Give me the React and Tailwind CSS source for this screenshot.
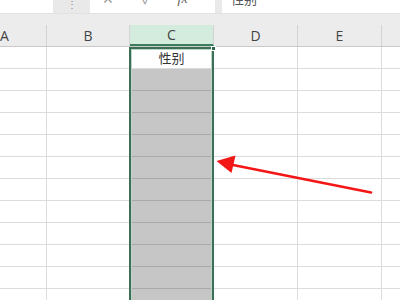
import React from "react";

const cols = [
  { l: "A", w: 84 },
  { l: "B", w: 83 },
  { l: "C", w: 84 },
  { l: "D", w: 84 },
  { l: "E", w: 84 },
  { l: "F", w: 84 },
];

const font = { fontFamily: '"Open Sans", "Noto Sans CJK SC", sans-serif' };

export default function App() {
  const rows = Array.from({ length: 12 });
  return (
    <div className="relative w-[400px] h-[300px] overflow-hidden bg-white" style={font}>
      {/* formula bar (cut at top) */}
      <div className="flex h-[13px] bg-[#e9e9e9] overflow-hidden">
        <div className="w-[53px] bg-white" />
        <div className="w-[37px] flex justify-center">
          <span className="text-[10px] leading-none text-[#8a8a8a] -mt-[1px]">⋮</span>
        </div>
        <div className="w-[125px] bg-white flex items-start text-[#9a9a9a] overflow-hidden">
          <span className="ml-[12px] text-[14px] leading-none -mt-[8px]">✕</span>
          <span className="ml-[28px] text-[14px] leading-none -mt-[8px]">✓</span>
          <span className="ml-[26px] text-[14px] italic leading-none -mt-[8px] text-[#666]" style={{ fontFamily: '"Liberation Serif", serif' }}>fx</span>
        </div>
        <div className="w-[7px]" />
        <div className="flex-1 bg-white overflow-hidden">
          <span className="ml-[9px] text-[13px] leading-none block -mt-[8px] text-[#555]" style={{ fontFamily: '"Noto Sans CJK SC", sans-serif' }}>性别</span>
        </div>
      </div>
      <div className="h-[12px] bg-[#ececec] border-t border-[#e2e2e2]" />

      <div className="-ml-[37px] relative">
        {/* header row */}
        <div className="flex h-[22px] bg-[#ececec] border-b border-[#c9c9c9]">
          {cols.map((c) => (
            <div
              key={c.l}
              style={{ width: c.w }}
              className={
                "shrink-0 flex items-center justify-center text-[14px] text-[#444] border-r border-[#d4d4d4] " +
                (c.l === "C" ? "bg-[#d3ecdd] border-b-2 border-b-[#3b7d5a]" : "")
              }
            >
              {c.l}
            </div>
          ))}
        </div>
        {/* body rows */}
        {rows.map((_, r) => (
          <div key={r} className="flex h-[22px]">
            {cols.map((c) => {
              const isC = c.l === "C";
              const gray = isC && r > 0;
              return (
                <div
                  key={c.l}
                  style={{ width: c.w }}
                  className={
                    "shrink-0 flex items-center justify-center border-r border-b " +
                    (gray
                      ? "bg-[#c6c6c7] border-b-[#a9a9aa] border-r-[#d4d4d4]"
                      : "bg-white border-[#dcdcdc]")
                  }
                >
                  {isC && r === 0 ? (
                    <span className="text-[13px] text-[#333]" style={{ fontFamily: '"Noto Sans CJK SC", sans-serif' }}>性别</span>
                  ) : null}
                </div>
              );
            })}
          </div>
        ))}
        {/* selection border */}
        <div className="absolute left-[166px] top-[22px] w-[85px] h-[300px] border-2 border-[#3d6f56] shadow-[inset_0_0_0_1px_#b9d6c6]" />
        <div className="absolute left-[248px] top-[21px] w-[5px] h-[5px] bg-[#2f6b4c] border border-white" />
      </div>

      {/* red arrow */}
      <svg className="absolute left-0 top-0" width="400" height="300" viewBox="0 0 400 300">
        <line x1="371" y1="192.5" x2="228" y2="164" stroke="#f21616" strokeWidth="2.6" strokeLinecap="round" />
        <polygon points="216.5,161 235.5,155.5 231.5,173" fill="#f21616" />
      </svg>
    </div>
  );
}
